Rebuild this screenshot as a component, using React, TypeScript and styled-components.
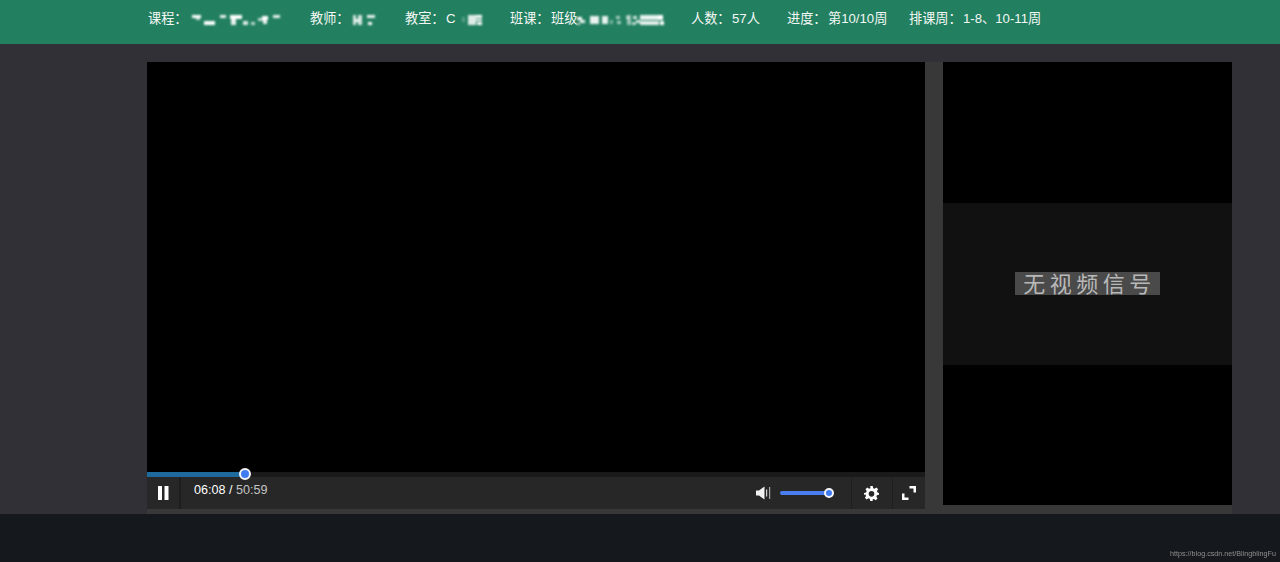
import React from "react";
import styled, { createGlobalStyle } from "styled-components";

const Global = createGlobalStyle`
  html, body { margin: 0; padding: 0; height: 100%; background: #313036; overflow: hidden; }
  #root { height: 100%; }
`;

const Page = styled.div`
  display: flex;
  flex-direction: column;
  height: 562px;
  font-family: "Liberation Sans", "Noto Sans CJK SC", sans-serif;
`;

const Header = styled.header`
  display: flex;
  align-items: center;
  height: 44px;
  padding: 0 0 7px 148px;
  box-sizing: border-box;
  background: #228060;
  color: #f4f7f5;
  font-size: 13.2px;
  line-height: 36px;
  white-space: nowrap;
`;

const Item = styled.span<{ $w: number }>`
  display: flex;
  align-items: center;
  width: ${(p) => p.$w}px;
  flex: none;
`;

const Label = styled.span<{ $w?: number }>`
  display: inline-block;
  flex: none;
  width: ${(p) => (p.$w ? `${p.$w}px` : "auto")};
`;

const Mosaic = styled.svg`
  flex: none;
  display: block;
  filter: blur(0.9px);
  overflow: visible;
`;

const Main = styled.main`
  display: flex;
  gap: 18px;
  width: 1085px;
  height: 452px;
  margin: 18px 0 0 147px;
  background: #383838;
`;

const PlayerColumn = styled.section`
  display: flex;
  flex-direction: column;
  width: 778px;
  height: 447px;
  flex: none;
`;

const Video = styled.div`
  height: 410px;
  background: #000;
`;

const Track = styled.div`
  position: relative;
  height: 5px;
  background: #1a1a1a;
`;

const Fill = styled.div`
  height: 100%;
  background: #1f6a9c;
`;

const Knob = styled.span<{ $size: number; $border: number }>`
  position: absolute;
  box-sizing: border-box;
  width: ${(p) => p.$size}px;
  height: ${(p) => p.$size}px;
  border-radius: 50%;
  background: #3f7cf2;
  border: ${(p) => p.$border}px solid #f4f6fa;
`;

const ProgressKnob = styled(Knob)`
  left: 92px;
  top: -4px;
`;

const Controls = styled.div`
  display: flex;
  align-items: stretch;
  height: 32px;
  background: #272727;
  color: #fff;
`;

const CtrlButton = styled.div<{ $w: number; $divider?: boolean }>`
  display: flex;
  align-items: center;
  justify-content: center;
  width: ${(p) => p.$w}px;
  flex: none;
  box-sizing: border-box;
  border-left: ${(p) => (p.$divider ? "1px solid #1e1e1e" : "0")};
`;

const GearButton = styled(CtrlButton)`
  padding-right: 2px;
`;

const PauseButton = styled(CtrlButton)`
  border-right: 2px solid #1e1e1e;
  box-sizing: content-box;
  width: 32px;
`;

const Time = styled.div`
  flex: 1;
  padding: 6px 0 0 13px;
  font-size: 12.6px;
  line-height: 14px;
  color: #fff;
`;

const Duration = styled.span`
  color: #c4c4c4;
`;

const VolumeGroup = styled.div`
  display: flex;
  align-items: center;
  gap: 9px;
  width: 95px;
  flex: none;
`;

const VolumeBar = styled.div`
  position: relative;
  width: 50px;
  height: 4px;
  border-radius: 2px;
  background: #4a7ff2;
`;

const VolumeKnob = styled(Knob)`
  right: -4px;
  top: -3px;
`;

const Side = styled.aside`
  display: flex;
  flex-direction: column;
  width: 289px;
  height: 443px;
  flex: none;
`;

const SideBlack = styled.div<{ $h: number }>`
  height: ${(p) => p.$h}px;
  background: #000;
`;

const NoSignal = styled.div`
  display: flex;
  align-items: center;
  justify-content: center;
  height: 162px;
  padding-bottom: 1px;
  box-sizing: border-box;
  background: #111;
`;

const NoSignalText = styled.div`
  width: 145px;
  height: 23px;
  background: #4a4a4a;
  color: #b8b8b8;
  font-family: "Noto Sans CJK SC", sans-serif;
  font-weight: 400;
  font-size: 22px;
  line-height: 20px;
  letter-spacing: 4.5px;
  text-align: center;
  text-indent: 4px;
  white-space: nowrap;
`;

const Footer = styled.footer`
  position: relative;
  flex: 1;
  background: #15191d;
`;

const Watermark = styled.span`
  position: absolute;
  right: 4px;
  bottom: 3px;
  font-size: 7.2px;
  line-height: 10px;
  color: #8f8f8f;
  will-change: transform;
`;

type R = [number, number, number, number, number?];

const Mos = ({ w, rects }: { w: number; rects: R[] }) => (
  <Mosaic width={w} height={12} viewBox={`0 0 ${w} 12`} aria-hidden>
    <g fill="#fff">
      {rects.map((r, i) => (
        <rect key={i} x={r[0]} y={r[1]} width={r[2]} height={r[3]} opacity={r[4] ?? 1} />
      ))}
    </g>
  </Mosaic>
);

const m1: R[] = [
  [2, 2, 9, 3], [6, 5, 4, 2, 0.7], [14, 8, 11, 4], [30, 2, 6, 3, 0.9], [40, 2, 12, 4],
  [41, 6, 5, 6, 0.9], [53, 8, 5, 4, 0.85], [61, 9, 4, 3, 0.7], [68, 5, 5, 3, 0.7],
  [72, 3, 6, 4], [73, 7, 4, 4, 0.9], [83, 2, 7, 3, 0.9],
];
const m2: R[] = [[1, 2, 3, 10, 0.8], [6, 2, 4, 10, 0.8], [3, 6, 4, 3, 0.9], [15, 2, 8, 3, 0.9], [16, 9, 4, 3]];
const m3: R[] = [[0, 4, 3, 5, 0.25], [6, 2, 8, 10, 0.85], [14, 2, 6, 3], [14, 6, 6, 2], [15, 9, 5, 3]];
const m4: R[] = [
  [0, 4, 5, 3], [3, 7, 5, 3, 0.9], [0, 10, 3, 2, 0.7], [13, 3, 9, 8, 0.9], [25, 3, 6, 8, 0.9],
  [33, 7, 3, 4, 0.4], [39, 3, 4, 3, 0.6], [40, 8, 4, 3, 0.6], [49, 3, 3, 3, 0.6],
  [50, 2, 4, 10, 0.55], [56, 3, 4, 3, 0.8], [59, 7, 4, 3, 0.8], [55, 9, 4, 3, 0.7],
  [63, 2, 18, 5, 0.9], [63, 8, 19, 4, 0.9], [81, 2, 5, 5], [83, 8, 4, 4],
];

export default function App() {
  return (
    <Page>
      <Global />
      <Header>
        <Item $w={162}>
          <Label $w={42}>课程：</Label>
          <Mos w={91} rects={m1} />
        </Item>
        <Item $w={95}>
          <Label $w={42}>教师：</Label>
          <Mos w={24} rects={m2} />
        </Item>
        <Item $w={105}>
          <Label $w={41}>教室：</Label>
          <Label $w={16}>C</Label>
          <Mos w={21} rects={m3} />
        </Item>
        <Item $w={181}>
          <Label $w={41}>班课：</Label>
          <Label $w={26}>班级</Label>
          <Mos w={87} rects={m4} />
        </Item>
        <Item $w={96}>
          <Label $w={41}>人数：</Label>
          <Label>57人</Label>
        </Item>
        <Item $w={122}>
          <Label $w={41}>进度：</Label>
          <Label>第10/10周</Label>
        </Item>
        <Item $w={140}>
          <Label $w={54}>排课周：</Label>
          <Label>1-8、10-11周</Label>
        </Item>
      </Header>
      <Main>
        <PlayerColumn>
          <Video />
          <Track>
            <Fill style={{ width: `${(98 / 778) * 100}%` }} />
            <ProgressKnob $size={12} $border={2} />
          </Track>
          <Controls>
            <PauseButton $w={32}>
              <svg width="12" height="14" viewBox="0 0 12 14">
                <rect x="1" y="0" width="4" height="14" fill="#fff" />
                <rect x="7.5" y="0" width="4" height="14" fill="#fff" />
              </svg>
            </PauseButton>
            <Time>
              06:08 / <Duration>50:59</Duration>
            </Time>
            <VolumeGroup>
              <svg width="15" height="14" viewBox="0 0 15 14">
                <path d="M0 4.5h3L8.5 0.5v13L3 9.5H0z" fill="#f2f2f2" />
                <rect x="10" y="3.5" width="1.2" height="7" fill="#d0d0d0" />
                <rect x="13" y="1" width="1.2" height="12" fill="#a8a8a8" />
              </svg>
              <VolumeBar>
                <VolumeKnob $size={10} $border={2} />
              </VolumeBar>
            </VolumeGroup>
            <GearButton $w={41} $divider>
              <svg width="15" height="15" viewBox="0 0 24 24">
                <path
                  fill="#fff"
                  fillRule="evenodd"
                  d="M10 0h4l.7 3.4c.8.2 1.5.5 2.2.9l2.9-1.900 2.800 2.800-1.900 2.900c.4.7.7 1.400.9 2.200L24 11v3l-3.400.7c-.2.8-.5 1.500-.9 2.200l1.900 2.900-2.800 2.800-2.900-1.900c-.7.4-1.400.7-2.200.9L14 24h-4l-.7-3.400c-.8-.2-1.500-.5-2.200-.9l-2.900 1.900-2.800-2.800 1.900-2.900c-.4-.7-.7-1.400-.9-2.200L0 14v-3l3.400-.7c.2-.8.5-1.500.9-2.200L2.400 5.200l2.800-2.800 2.900 1.900c.7-.4 1.400-.7 2.200-.9zM12 8a4.500 4.500 0 1 0 0 9 4.500 4.500 0 0 0 0-9z"
                />
              </svg>
            </GearButton>
            <CtrlButton $w={33} $divider>
              <svg width="14" height="14" viewBox="0 0 14 14">
                <path d="M7.500 0H14v6.500h-2.500v-4h-4z" fill="#fff" />
                <path d="M0 7.500h2.500v4h4V14H0z" fill="#fff" />
              </svg>
            </CtrlButton>
          </Controls>
        </PlayerColumn>
        <Side>
          <SideBlack $h={141} />
          <NoSignal>
            <NoSignalText>无视频信号</NoSignalText>
          </NoSignal>
          <SideBlack $h={140} />
        </Side>
      </Main>
      <Footer>
        <Watermark>https://blog.csdn.net/BlingblingFu</Watermark>
      </Footer>
    </Page>
  );
}
